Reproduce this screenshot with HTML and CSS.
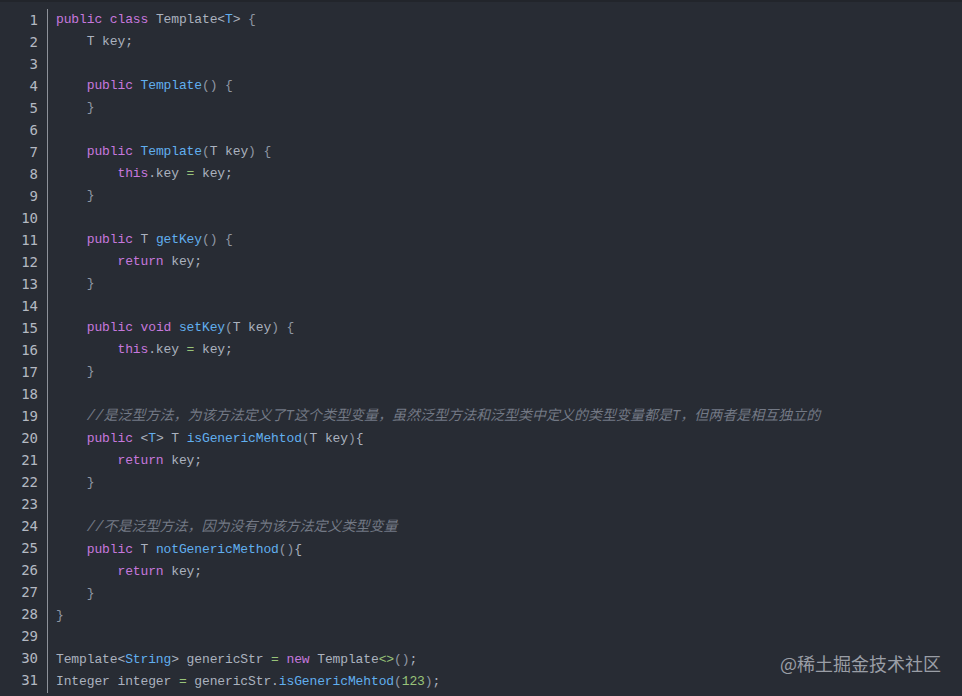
FILE: index.html
```html
<!DOCTYPE html>
<html lang="zh">
<head>
<meta charset="utf-8">
<title>Template</title>
<link rel="stylesheet" href="styles.css">
</head>
<body>
<div class="editor">
<div class="gutter"><div>1</div><div>2</div><div>3</div><div>4</div><div>5</div><div>6</div><div>7</div><div>8</div><div>9</div><div>10</div><div>11</div><div>12</div><div>13</div><div>14</div><div>15</div><div>16</div><div>17</div><div>18</div><div>19</div><div>20</div><div>21</div><div>22</div><div>23</div><div>24</div><div>25</div><div>26</div><div>27</div><div>28</div><div>29</div><div>30</div><div>31</div></div>
<pre class="code"><span class="kw">public</span> <span class="kw">class</span> Template&lt;<span class="ty">T</span>&gt; <span class="br">{</span>
    T key;

    <span class="kw">public</span> <span class="fn">Template</span><span class="br">()</span> <span class="br">{</span>
    <span class="br">}</span>

    <span class="kw">public</span> <span class="fn">Template</span><span class="br">(</span>T key<span class="br">)</span> <span class="br">{</span>
        <span class="kw">this</span>.key <span class="op">=</span> key;
    <span class="br">}</span>

    <span class="kw">public</span> T <span class="fn">getKey</span><span class="br">()</span> <span class="br">{</span>
        <span class="kw">return</span> key;
    <span class="br">}</span>

    <span class="kw">public</span> <span class="kw">void</span> <span class="fn">setKey</span><span class="br">(</span>T key<span class="br">)</span> <span class="br">{</span>
        <span class="kw">this</span>.key <span class="op">=</span> key;
    <span class="br">}</span>

    <span class="cm">//是泛型方法，为该方法定义了T这个类型变量，虽然泛型方法和泛型类中定义的类型变量都是T，但两者是相互独立的</span>
    <span class="kw">public</span> &lt;<span class="ty">T</span>&gt; T <span class="fn">isGenericMehtod</span><span class="br">(</span>T key<span class="br">)</span>{
        <span class="kw">return</span> key;
    <span class="br">}</span>

    <span class="cm">//不是泛型方法，因为没有为该方法定义类型变量</span>
    <span class="kw">public</span> T <span class="fn">notGenericMethod</span><span class="br">()</span>{
        <span class="kw">return</span> key;
    <span class="br">}</span>
<span class="br">}</span>

Template&lt;<span class="ty">String</span>&gt; genericStr <span class="op">=</span> <span class="kw">new</span> Template<span class="op">&lt;&gt;</span><span class="br">()</span>;
Integer integer <span class="op">=</span> genericStr.<span class="fn">isGenericMehtod</span><span class="br">(</span><span class="num">123</span><span class="br">)</span>;</pre>
</div>
<div class="watermark">@稀土掘金技术社区</div>
</body>
</html>
```
FILE: styles.css
```css
html, body {
  margin: 0;
  padding: 0;
  background: #282c34;
}
body {
  width: 962px;
  height: 696px;
  overflow: hidden;
  position: relative;
  border-top: 2px solid #22252b;
  box-sizing: border-box;
}
.editor {
  display: flex;
  padding-top: 7px;
  font-family: "Liberation Mono", "Noto Sans CJK SC", monospace;
  font-size: 13px;
  line-height: 22px;
  color: #abb2bf;
}
.gutter {
  width: 38px;
  padding-right: 9px;
  text-align: right;
  border-right: 1px solid #8e929a;
  color: #b4b9c2;
  letter-spacing: 0;
  font-size: 14px;
  font-family: "DejaVu Sans Mono", "Liberation Mono", monospace;
}
.code {
  margin: 0;
  padding-left: 8px;
  font: inherit;
  letter-spacing: -0.12px;
  white-space: pre;
}
.kw { color: #c678dd; }
.fn { color: #61afef; }
.ty { color: #61afef; }
.br { color: #8f96a3; }
.op { color: #98c379; }
.num { color: #98c379; }
.cm {
  color: #737985;
  font-style: italic;
  font-size: 14px;
  line-height: 22px;
  letter-spacing: 0;
}
.watermark {
  position: absolute;
  left: 780px;
  top: 649px;
  font-family: "Noto Sans CJK SC", sans-serif;
  font-size: 18px;
  line-height: 24px;
  color: #9a9ea6;
  letter-spacing: 0;
}
```
